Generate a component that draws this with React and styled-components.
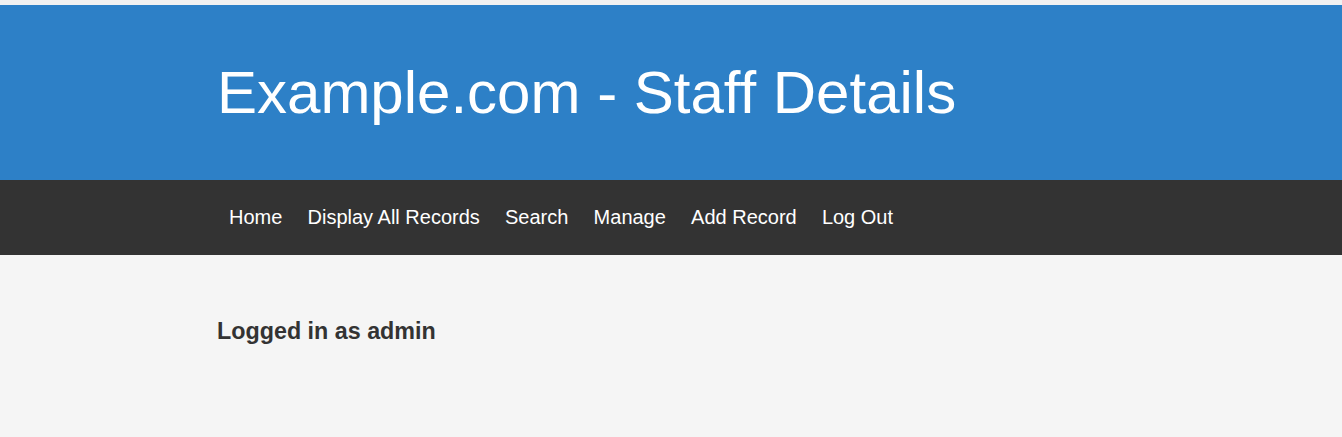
import React from 'react'
import styled, { createGlobalStyle } from 'styled-components'

const GlobalStyle = createGlobalStyle`
  html, body {
    margin: 0;
    padding: 0;
    font-family: "Liberation Sans", Arial, sans-serif;
  }
  body {
    padding-top: 5px;
    background: linear-gradient(#f1f1f1 0 5px, #f5f5f5 5px);
    min-height: 437px;
    box-sizing: border-box;
  }
`

const Container = styled.div`
  width: 100%;
  max-width: 908px;
  margin: 0 auto;
`

const Header = styled.header`
  background: #2d80c7;
  height: 175px;
  display: flex;
  align-items: center;
`

const Title = styled.h1`
  margin: 0;
  font-size: 60px;
  font-weight: normal;
  color: #fff;
`

const Nav = styled.nav`
  background: #333333;
  height: 75px;
  display: flex;
  align-items: center;
`

const Menu = styled.ul`
  list-style: none;
  margin: 0;
  padding: 0 0 0 12px;
  display: flex;
  gap: 25.2px;
`

const MenuLink = styled.a`
  color: #fff;
  font-size: 20px;
  text-decoration: none;
`

const Main = styled.main`
  padding-top: 63px;
`

const Status = styled.h3`
  margin: 0;
  font-size: 23.3px;
  font-weight: bold;
  color: #333;
`

const links = ['Home', 'Display All Records', 'Search', 'Manage', 'Add Record', 'Log Out']

const App = () => {
  return (
    <>
      <GlobalStyle />
      <Header>
        <Container>
          <Title>Example.com - Staff Details</Title>
        </Container>
      </Header>
      <Nav>
        <Container>
          <Menu>
            {links.map((l) => (
              <li key={l}>
                <MenuLink href="#">{l}</MenuLink>
              </li>
            ))}
          </Menu>
        </Container>
      </Nav>
      <Main>
        <Container>
          <Status>Logged in as admin</Status>
        </Container>
      </Main>
    </>
  )
}

export default App
